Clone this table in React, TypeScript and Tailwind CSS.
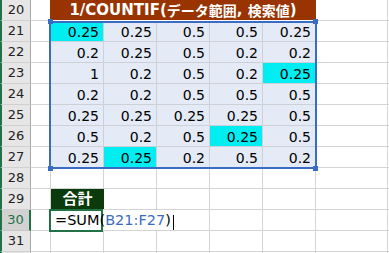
import React from "react";

type Cell = { v: string; c?: boolean };

const DATA: Cell[][] = [
  [{ v: "0.25", c: true }, { v: "0.25" }, { v: "0.5" }, { v: "0.5" }, { v: "0.25" }],
  [{ v: "0.2" }, { v: "0.25" }, { v: "0.5" }, { v: "0.2" }, { v: "0.2" }],
  [{ v: "1" }, { v: "0.2" }, { v: "0.5" }, { v: "0.2" }, { v: "0.25", c: true }],
  [{ v: "0.2" }, { v: "0.2" }, { v: "0.5" }, { v: "0.5" }, { v: "0.5" }],
  [{ v: "0.25" }, { v: "0.25" }, { v: "0.25" }, { v: "0.25" }, { v: "0.5" }],
  [{ v: "0.5" }, { v: "0.2" }, { v: "0.5" }, { v: "0.25", c: true }, { v: "0.5" }],
  [{ v: "0.25" }, { v: "0.25", c: true }, { v: "0.2" }, { v: "0.5" }, { v: "0.2" }],
];

function RowHead({ n, active }: { n?: number; active?: boolean }) {
  return (
    <div
      className={
        active
          ? "w-[31px] shrink-0 h-full box-border border-l-2 border-l-[#217346] border-r-2 border-r-[#217346] border-b border-b-[#c6c6c6] bg-[#d2d2d2] text-[#217346] flex items-center justify-center leading-[20px] text-[13px] font-['DejaVu_Sans',sans-serif]"
          : "w-[31px] shrink-0 h-full box-border border-l-2 border-l-[#217346] border-r border-r-[#a8a8a8] border-b border-b-[#d0d0d0] bg-[#e6e6e6] text-[#222] flex items-center justify-center leading-[20px] text-[13px] font-['DejaVu_Sans',sans-serif]"
      }
    >
      {n}
    </div>
  );
}

function Empty({ w }: { w: string }) {
  return <div className={`${w} shrink-0 h-full box-border border-r border-b border-[#d4d4d4] bg-white`} />;
}

function ColA() {
  return <div className="w-[20px] shrink-0 h-full box-border border-r border-b border-[#d4d4d4] bg-white" />;
}

function Trailing() {
  return (
    <>
      <div className="w-[72px] shrink-0 h-full box-border border-r border-b border-[#d4d4d4] bg-white" />
      <div className="flex-1 h-full box-border border-b border-[#d4d4d4] bg-white" />
    </>
  );
}

function BlankRow({ n }: { n?: number }) {
  return (
    <div className="flex h-[21px]">
      <RowHead n={n} />
      <ColA />
      <Empty w="w-[53px]" />
      <Empty w="w-[53px]" />
      <Empty w="w-[53px]" />
      <Empty w="w-[53px]" />
      <Empty w="w-[53px]" />
      <Trailing />
    </div>
  );
}

export default function App() {
  return (
    <div className="relative w-[389px] h-[253px] overflow-hidden bg-white text-black">
      {/* Row 20 header */}
      <div className="flex h-[21px]">
        <RowHead n={20} />
        <div className="w-[19px] shrink-0 h-full box-border border-b border-[#d4d4d4] bg-white" />
        <div className="w-[266px] shrink-0 h-[20px] bg-[#993300] text-white font-bold flex items-center justify-center leading-[20px] whitespace-nowrap">
          <span className="text-[15px] font-['DejaVu_Sans',sans-serif]">1/COUNTIF(</span>
          <span className="text-[14px] font-['Noto_Sans_CJK_JP',sans-serif]">データ範囲</span>
          <span className="text-[15px] font-['DejaVu_Sans',sans-serif] whitespace-pre">, </span>
          <span className="text-[14px] font-['Noto_Sans_CJK_JP',sans-serif]">検索値</span>
          <span className="text-[15px] font-['DejaVu_Sans',sans-serif]">)</span>
        </div>
        <Trailing />
      </div>

      {DATA.map((row, i) => (
        <div key={i} className="flex h-[21px]">
          <RowHead n={21 + i} />
          <ColA />
          {row.map((cell, j) => (
            <div
              key={j}
              className={`w-[53px] shrink-0 h-full box-border border-r border-b border-[#ccd1d8] flex items-end justify-end pr-[4px] leading-[16px] pb-[1px] text-[14px] font-['DejaVu_Sans',sans-serif] ${
                cell.c ? "bg-[#00eef2]" : "bg-[#e4ebf6]"
              }`}
            >
              {cell.v}
            </div>
          ))}
          <Trailing />
        </div>
      ))}

      <BlankRow n={28} />

      {/* Row 29 */}
      <div className="flex h-[21px]">
        <RowHead n={29} />
        <ColA />
        <div className="w-[53px] shrink-0 h-full box-border border-b border-[#d4d4d4] bg-[#0b3a0d] text-white font-bold text-[15px] font-['Noto_Sans_CJK_JP',sans-serif] flex items-center justify-center leading-[20px] pb-[2px]">
          合計
        </div>
        <Empty w="w-[53px]" />
        <Empty w="w-[53px]" />
        <Empty w="w-[53px]" />
        <Empty w="w-[53px]" />
        <Trailing />
      </div>

      {/* Row 30 */}
      <div className="flex h-[21px]">
        <RowHead n={30} active />
        <ColA />
        <div className="w-[53px] shrink-0 h-full box-border border-b border-[#d4d4d4] bg-white relative">
          {/* Active cell border */}
          <div className="absolute -left-[2px] -top-[1px] w-[54px] h-[23px] border-2 border-[#217346] pointer-events-none" />
          <div className="absolute z-10 left-[4px] top-0 h-[20px] leading-[20px] whitespace-nowrap text-[14.5px] font-['DejaVu_Sans',sans-serif] text-black">
            =SUM(<span className="text-[#3a6cc4]">B21:F27</span>)
          </div>
        </div>
        <div className="w-[53px] shrink-0 h-full box-border border-b border-[#d4d4d4] bg-transparent" />
        <Empty w="w-[53px]" />
        <Empty w="w-[53px]" />
        <Empty w="w-[53px]" />
        <Trailing />
      </div>

      <BlankRow n={31} />
      <BlankRow />

      {/* Formula range highlight */}
      <div className="absolute left-[49px] top-[21px] w-[268px] h-[148px] border-2 border-[#3a6cc4] pointer-events-none" />
      <div className="absolute left-[48px] top-[19px] w-[5px] h-[5px] bg-[#3a6cc4]" />
      <div className="absolute left-[313px] top-[19px] w-[5px] h-[5px] bg-[#3a6cc4]" />
      <div className="absolute left-[48px] top-[166px] w-[5px] h-[5px] bg-[#3a6cc4]" />
      <div className="absolute left-[313px] top-[166px] w-[5px] h-[5px] bg-[#3a6cc4]" />

      {/* Text cursor */}
      <div className="absolute left-[173px] top-[215px] w-[1px] h-[15px] bg-black" />
    </div>
  );
}
